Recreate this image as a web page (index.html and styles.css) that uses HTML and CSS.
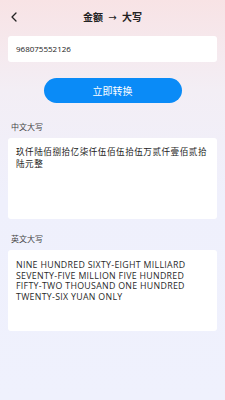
FILE: index.html
```html
<!DOCTYPE html>
<html lang="zh">
<head>
  <meta charset="UTF-8">
  <meta name="viewport" content="width=device-width, initial-scale=1.0">
  <title>金额转大写</title>
  <link rel="stylesheet" href="styles.css">
</head>
<body>
  <div class="page">
    <div class="topbar">
      <div class="back">
        <svg width="8" height="10" viewBox="0 0 8 10"><path d="M6 1 L2 5 L6 9" fill="none" stroke="#222" stroke-width="1.3" stroke-linecap="round" stroke-linejoin="round"/></svg>
      </div>
      <div class="title">金额 <span class="arrow">→</span> 大写</div>
    </div>

    <div class="card input-card">968075552126</div>

    <div class="btn-row">
      <div class="convert-btn">立即转换</div>
    </div>

    <div class="label">中文大写</div>
    <div class="card result cn">玖仟陆佰捌拾亿柒仟伍佰伍拾伍万贰仟壹佰贰拾陆元整</div>

    <div class="label second">英文大写</div>
    <div class="card result en">NINE HUNDRED <span class="nw">SIXTY-EIGHT</span> MILLIARD <span class="nw">SEVENTY-FIVE</span> MILLION FIVE HUNDRED <span class="nw">FIFTY-TWO</span> THOUSAND ONE HUNDRED <span class="nw">TWENTY-SIX</span> YUAN ONLY</div>
  </div>
</body>
</html>
```

FILE: styles.css
```css
body {
  margin: 0;
  padding: 0;
  width: 225px;
  height: 400px;
  overflow: hidden;
  font-family: "Noto Sans CJK SC", sans-serif;
  background: linear-gradient(180deg, #f8e3e5 0px, #f3eef5 90px, #eff0fc 200px, #eff1fd 400px);
}

.page {
  padding: 0 8px;
}

.topbar {
  height: 34px;
  display: flex;
  align-items: center;
  position: relative;
}

.back {
  position: absolute;
  left: 2px;
  top: 12px;
  width: 8px;
  height: 10px;
  display: flex;
}

.title {
  flex: 1;
  text-align: center;
  font-size: 10px;
  font-weight: 700;
  color: #222;
  margin-top: -2px;
}

.arrow {
  font-family: "DejaVu Sans", sans-serif;
  font-weight: 400;
  margin: 0 3px;
}

.card {
  background: #fff;
  border-radius: 3px;
}

.input-card {
  margin-top: 2px;
  height: 26px;
  line-height: 26px;
  padding: 0 8px;
  font-family: "Open Sans", sans-serif;
  font-size: 8px;
  color: #222;
}

.btn-row {
  display: flex;
  justify-content: center;
  margin-top: 16px;
}

.convert-btn {
  width: 138px;
  height: 25px;
  line-height: 25px;
  border-radius: 13px;
  background: #0a8bf7;
  color: #fff;
  text-align: center;
  font-size: 10px;
}

.label {
  margin-top: 18px;
  padding-left: 3px;
  font-size: 8px;
  color: #444;
  line-height: 12px;
}

.label.second {
  margin-top: 14px;
}

.result {
  margin-top: 5px;
  height: 81px;
  box-sizing: border-box;
  padding: 7px 8px;
  color: #222;
}

.cn {
  font-size: 8.6px;
  line-height: 12px;
  letter-spacing: 0.5px;
}

.en {
  font-family: "Open Sans", sans-serif;
  font-size: 8.8px;
  line-height: 10.5px;
  letter-spacing: 0.3px;
  padding-top: 10px;
  color: #2a2a2a;
}

.nw {
  white-space: nowrap;
}
```
